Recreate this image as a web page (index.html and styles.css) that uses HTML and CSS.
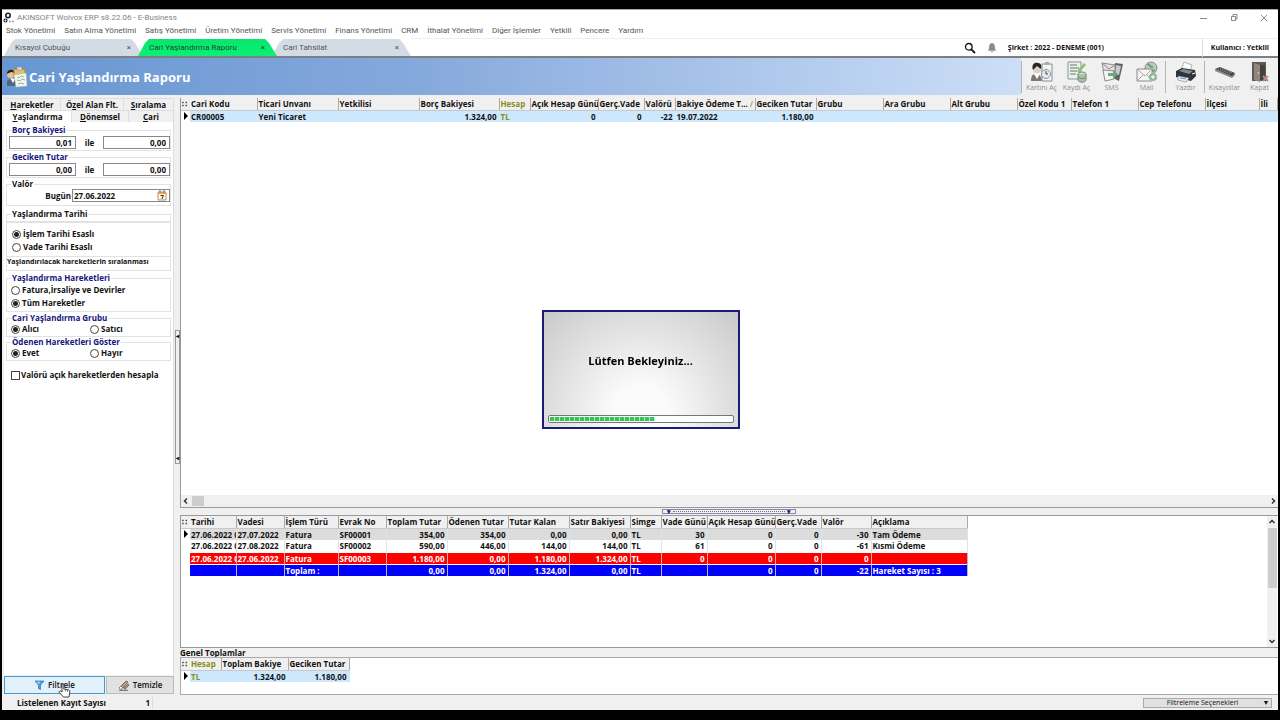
FILE: index.html
```html
<!DOCTYPE html>
<html lang="tr">
<head>
    <meta charset="UTF-8">
    <title>AKINSOFT Wolvox ERP</title>
    <link rel="stylesheet" href="styles.css">
</head>
<body>
    <header class="titlebar">
        <svg class="app-icon" width="12" height="12" viewBox="0 0 12 12">
            <circle cx="5" cy="3.500" r="2.200" fill="none" stroke="#16242e" stroke-width="1.600"/>
            <circle cx="2.500" cy="8.500" r="1.500" fill="none" stroke="#16242e" stroke-width="1.200"/>
            <path d="M6 9.500h2M9 9.500h2" stroke="#9aa4ac" stroke-width="1.500"/>
        </svg>
        <span class="app-title">AKINSOFT Wolvox ERP s8.22.06 - E-Business</span>
        <div class="window-buttons">
            <button aria-label="Küçült"><svg width="10" height="10" viewBox="0 0 10 10"><path d="M1 5.500h7"/></svg></button>
            <button aria-label="Geri yükle"><svg width="10" height="10" viewBox="0 0 10 10"><path d="M2.500 3.500h4v4h-4zM4 3.500v-2h4v4.500h-1.500"/></svg></button>
            <button aria-label="Pencereyi kapat"><svg width="10" height="10" viewBox="0 0 10 10"><path d="M2 2l6 6M8 2l-6 6"/></svg></button>
        </div>
    </header>

    <nav class="menu">
        <a href="#">Stok Yönetimi</a>
        <a href="#">Satın Alma Yönetimi</a>
        <a href="#">Satış Yönetimi</a>
        <a href="#">Üretim Yönetimi</a>
        <a href="#">Servis Yönetimi</a>
        <a href="#">Finans Yönetimi</a>
        <a href="#">CRM</a>
        <a href="#">İthalat Yönetimi</a>
        <a href="#">Diğer İşlemler</a>
        <a href="#">Yetkili</a>
        <a href="#">Pencere</a>
        <a href="#">Yardım</a>
    </nav>

    <div class="tabstrip">
        <div class="tab"><a href="#">Kısayol Çubuğu</a><button aria-label="Sekmeyi kapat">×</button></div>
        <div class="tab active"><a href="#">Cari Yaşlandırma Raporu</a><button aria-label="Sekmeyi kapat">×</button></div>
        <div class="tab"><a href="#">Cari Tahsilat</a><button aria-label="Sekmeyi kapat">×</button></div>
        <div class="session">
            <button aria-label="Ara"><svg width="12" height="12" viewBox="0 0 12 12"><circle cx="4.800" cy="4.800" r="3.300" fill="none" stroke="#111" stroke-width="1.300"/><path d="M7.300 7.300l3.700 3.700" stroke="#111" stroke-width="1.800"/></svg></button>
            <button aria-label="Bildirimler"><svg width="10" height="12" viewBox="0 0 10 12"><path d="M5 1c-2 .3-2.700 1.800-2.800 3.500C2.100 7 1.600 7.800.8 8.700h8.400C8.400 7.800 7.900 7 7.800 4.500 7.700 2.800 7 1.300 5 1zM3.800 9.300h2.400L5 10.700z" fill="#8b8b8b"/></svg></button>
            <span class="company">Şirket : 2022 - DENEME (001)</span>
            <span class="user">Kullanıcı : Yetkili</span>
        </div>
    </div>

    <div class="banner">
        <svg class="banner-icon" width="22" height="22" viewBox="0 0 22 22">
            <path d="M1 20v-5l4-3 5 2v6z" fill="#4f6580"/>
            <path d="M4 12l3 5 2-4z" fill="#fff"/>
            <circle cx="5" cy="8" r="4" fill="#edc39b"/>
            <path d="M1 8c-.5-5 7-6 8-1L5 6z" fill="#2b2320"/>
            <path d="M8 3h11v9H8z" fill="#e3c067" stroke="#a78335"/>
            <path d="M11 1h5v3h-5z" fill="#d5d9da" stroke="#8b8b8b" stroke-width=".5"/>
            <path d="M8 9l12-2 1 13-11 1z" fill="#f4f6f2" stroke="#b7bdb9" stroke-width=".6"/>
            <path d="M11 11l2 1 2-2 3 1M11 14l3 1 2-2 3 1M12 18l3-1 3 1" fill="none" stroke="#8fb98a"/>
        </svg>
        <h1>Cari Yaşlandırma Raporu</h1>
        <div class="toolbar">
            <div class="tools">
                <button>
                    <svg width="24" height="22" viewBox="0 0 24 22"><path d="M1 20c0-6 2-7 5-7s5 1 6 7z" fill="#777"/><path d="M4 13l3 5 3-5z" fill="#fff"/><circle cx="7" cy="8" r="4" fill="#dccdbf"/><path d="M3 9C1 3 5 1 8 2c3 0 4 3 3 6L7 5z" fill="#262626"/><path d="M12 3h10v17H12z" fill="#f5f5f5" stroke="#8a8a8a"/><path d="M15 1h4v3h-4z" fill="#aaa"/><circle cx="16" cy="13" r="4.500" fill="#e2e9ef" stroke="#8796a6"/><path d="M16 10v3h2" fill="none" stroke="#444"/></svg>
                    Kartını Aç
                </button>
                <button>
                    <svg width="24" height="22" viewBox="0 0 24 22"><path d="M3 1h13v17H3z" fill="#eef2ee" stroke="#89948b"/><path d="M5 4h7M5 7h9M5 10h7M5 13h6" stroke="#8da18f" stroke-width="1.500"/><path d="M12 10l7-8 2 2-7 8z" fill="#91c078"/><ellipse cx="17" cy="13" rx="4" ry="2" fill="#dde2db" stroke="#778b77"/><path d="M13 13v6c1 3 7 3 8 0v-6M13 16c2 2 6 2 8 0" fill="#aac3a8" stroke="#708871"/></svg>
                    Kaydı Aç
                </button>
                <button>
                    <svg width="24" height="22" viewBox="0 0 24 22"><path d="M15 2l8 1-4 17-6-3z" fill="#5f6163"/><path d="M16 4l5 1-2 9-4-1z" fill="#c5cbd1"/><path d="M2 2l13 2v8L4 13z" fill="#e4e4e4" stroke="#8c8c8c"/><path d="M2 2l7 6 6-4" fill="none" stroke="#b07474"/><path d="M3 9l12 1-1 8-9 2z" fill="#f3f3f3" stroke="#8b8b8b"/><path d="M8 12h5V9l5 4-5 5v-3H8z" fill="#71a57a"/></svg>
                    SMS
                </button>
                <button>
                    <svg width="24" height="22" viewBox="0 0 24 22"><circle cx="16" cy="7" r="6" fill="#bbc8bb" stroke="#84968a"/><path d="M12 3c3 0 3 4 6 3M13 10c2-2 4 1 7-1" stroke="#6d9e78" fill="none" stroke-width="2"/><path d="M2 8h15v12H2z" fill="#f5f5f5" stroke="#8a8a8a"/><path d="M2 8l8 7 7-7M2 20l6-6M17 20l-5-6" fill="none" stroke="#a8a8a8"/><circle cx="18" cy="16" r="4" fill="#91b898"/><path d="M16 16h4M18 14v4" stroke="#fff"/></svg>
                    Mail
                </button>
            </div>
            <div class="tools">
                <button>
                    <svg width="24" height="22" viewBox="0 0 24 22"><path d="M7 9L10 1l8 3-2 7z" fill="#fafafa" stroke="#999" stroke-width=".7"/><path d="M2 10l6-3 13 2 1 6-5 5-15-4z" fill="#303438"/><path d="M5 10l4-2 10 2-4 3z" fill="#828990"/><path d="M4 15l11 2-3 4-8-2z" fill="#eef2f8" stroke="#777" stroke-width=".6"/><path d="M6 17l6 1" stroke="#5e93ca"/><path d="M18 13l3-1" stroke="#fff"/></svg>
                    Yazdır
                </button>
            </div>
            <div class="tools">
                <button>
                    <svg width="24" height="22" viewBox="0 0 24 22"><path d="M2 8l5-2 15 6-3 4z" fill="#454545"/><path d="M2 8v2l17 7 3-3v-2l-3 3z" fill="#888"/><path d="M5 8l13 5M7 7l13 5" stroke="#aaa" stroke-dasharray="1 1"/></svg>
                    Kısayollar
                </button>
                <button>
                    <svg width="24" height="22" viewBox="0 0 24 22"><path d="M4 1h14v19H4z" fill="#625852"/><path d="M6 2l6 2v17l-6-2z" fill="#92877e"/><path d="M12 4h5v15h-5z" fill="#42413d"/><circle cx="10.500" cy="12" r=".8" fill="#ddd"/><path d="M15 15l5 5M20 15l-5 5" stroke="#b98a8a" stroke-width="2"/></svg>
                    Kapat
                </button>
            </div>
        </div>
    </div>

    <main class="workspace">
        <aside class="filters">
            <div class="filter-tabs upper">
                <button><u>H</u>areketler</button>
                <button>Ö<u>z</u>el Alan Flt.</button>
                <button><u>S</u>ıralama</button>
            </div>
            <div class="filter-tabs lower">
                <button class="selected"><u>Y</u>aşlandırma</button>
                <button><u>D</u>önemsel</button>
                <button><u>C</u>ari</button>
            </div>

            <form class="filter-form">
                <fieldset class="range">
                    <legend>Borç Bakiyesi</legend>
                    <input type="text" value="0,01" aria-label="Borç bakiyesi alt">
                    <span>ile</span>
                    <input type="text" value="0,00" aria-label="Borç bakiyesi üst">
                </fieldset>
                <fieldset class="range">
                    <legend>Geciken Tutar</legend>
                    <input type="text" value="0,00" aria-label="Geciken tutar alt">
                    <span>ile</span>
                    <input type="text" value="0,00" aria-label="Geciken tutar üst">
                </fieldset>
                <fieldset class="plain date-row">
                    <legend>Valör</legend>
                    <label for="valor">Bugün</label>
                    <div class="date-box">
                        <input type="text" id="valor" value="27.06.2022">
                        <button type="button" aria-label="Takvim"><svg width="10" height="11" viewBox="0 0 10 11"><path d="M1 2h8v8H1z" fill="#fff8e8" stroke="#a79675"/><path d="M1 2h8v2H1z" fill="#e9a94b"/><path d="M3 0v3M7 0v3" stroke="#777"/><path d="M3.500 5.500h3L4.800 9" fill="none" stroke="#333"/></svg></button>
                    </div>
                </fieldset>
                <fieldset class="plain heading">
                    <legend>Yaşlandırma Tarihi</legend>
                </fieldset>
                <div class="basis">
                    <label><input type="radio" name="tarih" checked>İşlem Tarihi Esaslı</label>
                    <label><input type="radio" name="tarih">Vade Tarihi Esaslı</label>
                </div>
                <p class="note">Yaşlandırılacak hareketlerin sıralanması</p>
                <fieldset class="stacked">
                    <legend>Yaşlandırma Hareketleri</legend>
                    <label><input type="radio" name="hareket">Fatura,İrsaliye ve Devirler</label>
                    <label><input type="radio" name="hareket" checked>Tüm Hareketler</label>
                </fieldset>
                <fieldset class="pair">
                    <legend>Cari Yaşlandırma Grubu</legend>
                    <label><input type="radio" name="grup" checked>Alıcı</label>
                    <label><input type="radio" name="grup">Satıcı</label>
                </fieldset>
                <fieldset class="pair">
                    <legend>Ödenen Hareketleri Göster</legend>
                    <label><input type="radio" name="odenen" checked>Evet</label>
                    <label><input type="radio" name="odenen">Hayır</label>
                </fieldset>
                <label class="check"><input type="checkbox">Valörü açık hareketlerden hesapla</label>
            </form>

            <div class="actions">
                <button class="primary">
                    <svg width="11" height="10" viewBox="0 0 11 10"><path d="M1 1h9L6.500 5v4.500l-2-1V5z" fill="#4a9be4" stroke="#2b73bd" stroke-width=".7"/><path d="M2.500 1.700h4L5 4z" fill="#a6d6fa"/></svg>
                    Filtrele
                    <svg class="pointer" width="13" height="15" viewBox="0 0 13 15"><path d="M4 9V2c0-1.300 1.800-1.300 1.800 0v4l5 1c1 .3 1.200 1 1 2l-.8 5H5.500L1.300 9.500C.6 8.300 2 7.500 3 8.400z" fill="#fff" stroke="#333" stroke-width=".9"/><path d="M7.600 6.500v2M9.500 7v2" stroke="#555" stroke-width=".7"/></svg>
                </button>
                <button>
                    <svg width="12" height="11" viewBox="0 0 12 11"><path d="M3 6l5-5 2 1-5 6z" fill="#dc8b66" stroke="#555" stroke-width=".7"/><path d="M1 8l2-2 2 2-2 1.500z" fill="#fff" stroke="#555" stroke-width=".7"/><path d="M6 8l4-4 1 1-4 4.500z" fill="#7eab69" stroke="#445" stroke-width=".6"/><path d="M1 10.300h9" stroke="#444" stroke-width=".8"/></svg>
                    Temizle
                </button>
            </div>
        </aside>

        <div class="splitter"><span class="grip">◂<i></i>◂</span></div>

        <section class="content">
            <div class="grid-main">
                <table class="grid accounts">
                    <colgroup>
                        <col class="w9"><col class="w67"><col class="w81"><col class="w81"><col class="w80"><col class="w31"><col class="w68"><col class="w46"><col class="w31"><col class="w80"><col class="w61"><col class="w67"><col class="w67"><col class="w67"><col class="w54"><col class="w67"><col class="w67"><col class="w54"><col>
                    </colgroup>
                    <thead>
                        <tr><th>∷</th><th>Cari Kodu</th><th>Ticari Unvanı</th><th>Yetkilisi</th><th>Borç Bakiyesi</th><th class="olive">Hesap</th><th>Açık Hesap Günü</th><th>Gerç.Vade</th><th>Valörü</th><th>Bakiye Ödeme T... <span class="sort">∕</span></th><th>Geciken Tutar</th><th>Grubu</th><th>Ara Grubu</th><th>Alt Grubu</th><th>Özel Kodu 1</th><th>Telefon 1</th><th>Cep Telefonu</th><th>İlçesi</th><th>İli</th></tr>
                    </thead>
                    <tbody>
                        <tr class="current"><td class="mark"><i></i></td><td>CR00005</td><td>Yeni Ticaret</td><td></td><td class="num">1.324,00</td><td class="olive">TL</td><td class="num">0</td><td class="num">0</td><td class="num">-22</td><td>19.07.2022</td><td class="num">1.180,00</td><td></td><td></td><td></td><td></td><td></td><td></td><td></td><td></td></tr>
                    </tbody>
                </table>
                <div class="hscroll">
                    <svg width="8" height="8" viewBox="0 0 8 8"><path d="M5 1.500L2.500 4 5 6.500"/></svg>
                    <span class="thumb"></span>
                    <svg width="8" height="8" viewBox="0 0 8 8"><path d="M3 1.500L5.500 4 3 6.500"/></svg>
                </div>
            </div>

            <div class="splitter-h"><span class="grip-h">▾<i></i>▾</span></div>

            <div class="grid-detail">
                <div class="detail-body">
                    <table class="grid movements">
                        <colgroup>
                            <col class="w9"><col class="w46"><col class="w48"><col class="w54"><col class="w48"><col class="w61"><col class="w61"><col class="w61"><col class="w61"><col class="w31"><col class="w46"><col class="w68"><col class="w46"><col class="w50"><col class="w96">
                        </colgroup>
                        <thead>
                            <tr><th>∷</th><th>Tarihi</th><th>Vadesi</th><th>İşlem Türü</th><th>Evrak No</th><th>Toplam Tutar</th><th>Ödenen Tutar</th><th>Tutar Kalan</th><th>Satır Bakiyesi</th><th>Simge</th><th>Vade Günü</th><th>Açık Hesap Günü</th><th>Gerç.Vade</th><th>Valör</th><th>Açıklama</th></tr>
                        </thead>
                        <tbody>
                            <tr class="grey"><td class="mark"><i></i></td><td>27.06.2022 0</td><td>27.07.2022</td><td>Fatura</td><td>SF00001</td><td class="num">354,00</td><td class="num">354,00</td><td class="num">0,00</td><td class="num">0,00</td><td>TL</td><td class="num">30</td><td class="num">0</td><td class="num">0</td><td class="num">-30</td><td>Tam Ödeme</td></tr>
                            <tr><td class="mark"></td><td>27.06.2022 0</td><td>27.08.2022</td><td>Fatura</td><td>SF00002</td><td class="num">590,00</td><td class="num">446,00</td><td class="num">144,00</td><td class="num">144,00</td><td>TL</td><td class="num">61</td><td class="num">0</td><td class="num">0</td><td class="num">-61</td><td>Kısmi Ödeme</td></tr>
                            <tr class="late"><td class="mark"></td><td>27.06.2022 0</td><td>27.06.2022</td><td>Fatura</td><td>SF00003</td><td class="num">1.180,00</td><td class="num">0,00</td><td class="num">1.180,00</td><td class="num">1.324,00</td><td>TL</td><td class="num">0</td><td class="num">0</td><td class="num">0</td><td class="num">0</td><td></td></tr>
                            <tr class="sum"><td class="mark"></td><td></td><td></td><td>Toplam :</td><td></td><td class="num">0,00</td><td class="num">0,00</td><td class="num">1.324,00</td><td class="num">0,00</td><td>TL</td><td></td><td class="num">0</td><td class="num">0</td><td class="num">-22</td><td>Hareket Sayısı : 3</td></tr>
                        </tbody>
                    </table>
                </div>
                <div class="vscroll">
                    <svg width="8" height="8" viewBox="0 0 8 8"><path d="M1.500 5L4 2.500 6.500 5"/></svg>
                    <span class="thumb"></span>
                    <svg width="8" height="8" viewBox="0 0 8 8"><path d="M1.500 3L4 5.500 6.500 3"/></svg>
                </div>
            </div>

            <h2>Genel Toplamlar</h2>
            <div class="grid-totals">
                <table class="grid totals">
                    <colgroup><col class="w9"><col class="w31"><col class="w67"><col class="w61"></colgroup>
                    <thead>
                        <tr><th>∷</th><th class="olive">Hesap</th><th>Toplam Bakiye</th><th>Geciken Tutar</th></tr>
                    </thead>
                    <tbody>
                        <tr class="current"><td class="mark"><i></i></td><td class="olive">TL</td><td class="num">1.324,00</td><td class="num">1.180,00</td></tr>
                    </tbody>
                </table>
            </div>
        </section>
    </main>

    <footer class="statusbar">
        <span class="status-label">Listelenen Kayıt Sayısı</span>
        <span class="status-count">1</span>
        <button class="filter-options"><span>Filtreleme Seçenekleri</span><i>▼</i></button>
    </footer>

    <div class="wait" role="dialog" aria-label="Lütfen Bekleyiniz">
        <p>Lütfen Bekleyiniz...</p>
        <div class="progress"><span style="width: 58%"></span></div>
    </div>
</body>
</html>
```
FILE: styles.css
```css
* {
    box-sizing: border-box;
}
body {
    margin: 0;
    height: 100vh;
    padding: 9px 2px 10px 2px;
    display: flex;
    flex-direction: column;
    background-color: #000;
    color: #111;
    font-family: "Open Sans", "Noto Sans", sans-serif;
    font-size: 8px;
    line-height: 12px;
}
button, input {
    font: inherit;
    color: inherit;
    margin: 0;
    padding: 0;
}
button {
    border: 0;
    background: none;
}
a {
    color: inherit;
    text-decoration: none;
}
svg {
    display: block;
    flex: none;
}
i {
    font-style: normal;
}

/* Title and menu */
.titlebar, .menu, .tab {
    font-family: Roboto, "Noto Sans", sans-serif;
}
.titlebar {
    display: flex;
    align-items: center;
    gap: 2px;
    height: 16px;
    padding-left: 1px;
    background-color: #fff;
    border-top: 1px solid #aaa;
    color: #858585;
}
.window-buttons {
    display: flex;
    gap: 20px;
    margin-left: auto;
    padding-right: 9px;
}
.window-buttons svg {
    fill: none;
    stroke: #888;
}
.menu {
    display: flex;
    gap: 9px;
    height: 13px;
    padding-left: 4px;
    background-color: #fff;
    color: #555;
}

/* Open documents */
.tabstrip {
    display: flex;
    align-items: flex-end;
    height: 20px;
    background-color: #fff;
    border-bottom: 2px solid #7b8084;
    padding-left: 2px;
}
.tab {
    display: flex;
    justify-content: space-between;
    align-items: center;
    width: 139px;
    height: 17px;
    margin-right: -5px;
    padding: 0 12px 0 11px;
    background-color: #d3dce4;
    clip-path: polygon(0 100%, 7px 4px, 11px 0, calc(100% - 12px) 0, calc(100% - 8px) 4px, 100% 100%);
    color: #555;
}
.tab.active {
    background: linear-gradient(#08e56b, #0af077);
    color: #174a2b;
    z-index: 1;
}
.session {
    display: flex;
    align-items: center;
    gap: 11px;
    flex: 1;
    height: 18px;
    margin-left: 5px;
    justify-content: flex-end;
    border-top: 1px solid #eee;
    font-weight: bold;
    font-size: 7px;
}
.company {
    width: 183px;
}
.user {
    border-left: 1px solid #ddd;
    padding: 3px 9px 3px 8px;
}

/* Report heading */
.banner {
    display: flex;
    align-items: center;
    height: 37px;
    padding-left: 4px;
    background: linear-gradient(90deg, #6796d2, #86a9dc 33%, #cddff7 80%);
}
h1 {
    margin: 0 auto 0 1px;
    font-size: 13px;
    line-height: 18px;
    color: #fff;
}
.toolbar {
    display: flex;
    align-items: center;
    align-self: stretch;
    background-color: #f0f0f0;
    color: #8d8d8d;
}
.tools {
    display: flex;
    border-left: 1px solid #b5b5b5;
    padding: 0 1px 0 2px;
}
.tools button {
    width: 35px;
    display: flex;
    flex-direction: column;
    align-items: center;
    line-height: 10px;
    font-size: 7px;
    white-space: nowrap;
}

/* Filters */
.workspace {
    display: flex;
    flex: 1;
    min-height: 0;
    padding-top: 3px;
    background-color: #f0f0f0;
    font-weight: bold;
}
.filters {
    display: flex;
    flex-direction: column;
    width: 172px;
    padding-left: 2px;
}
.filter-tabs {
    display: grid;
    height: 12px;
}
.upper {
    grid-template-columns: 57px 63px 1fr;
}
.lower {
    grid-template-columns: 68px 57px 1fr;
}
.filter-tabs button {
    border: 1px solid #dedede;
    border-width: 1px 1px 0 0;
    line-height: 11px;
}
.filter-tabs .selected {
    background-color: #fff;
}
.filter-form {
    flex: 1;
    padding: 3px 2px 0 2px;
    background-color: #fff;
    border-right: 1px solid #ddd;
}
fieldset {
    margin: 0 0 1px 0;
    padding: 1px 0 1px 2px;
    border: 1px solid #e2e2e2;
    min-width: 0;
}
legend {
    margin-left: 2px;
    padding: 0 1px;
    line-height: 10px;
    color: #14147c;
}
.plain legend {
    color: #111;
}
.range {
    display: flex;
    align-items: center;
    justify-content: space-between;
}
.range input {
    width: 67px;
    height: 13px;
    padding-right: 3px;
    border: 1px solid #888;
    text-align: right;
}
.date-row {
    display: flex;
    align-items: center;
    justify-content: flex-end;
    gap: 1px;
    padding-top: 0;
    padding-bottom: 3px;
}
.date-box {
    display: flex;
    align-items: center;
    width: 98px;
    height: 13px;
    border: 1px solid #888;
}
.date-box input {
    width: 84px;
    border: 0;
    padding-left: 1px;
    line-height: 11px;
    height: 11px;
}
.heading {
    margin-top: 3px;
    margin-bottom: 0;
}
.basis {
    display: flex;
    flex-direction: column;
    gap: 1px;
    padding: 5px 0 3px 3px;
    border: 1px solid #e2e2e2;
}
label {
    display: flex;
    align-items: center;
    gap: 2px;
}
.basis label, .stacked label, .pair label {
    padding-left: 2px;
}
input[type="radio"], input[type="checkbox"] {
    appearance: none;
    width: 9px;
    height: 9px;
    border: 1px solid #444;
    background-color: #fff;
}
input[type="radio"] {
    border-radius: 50%;
}
input[type="radio"]:checked {
    background: radial-gradient(circle, #222 2px, #fff 3px);
}
.note {
    margin: 0 0 2px 0;
    padding: 0 0 3px 0;
    font-size: 7px;
    line-height: 10px;
    border: 1px solid #e2e2e2;
    border-top: 0;
    white-space: nowrap;
}
.stacked {
    padding-bottom: 2px;
}
.stacked label + label {
    margin-top: 1px;
}
.pair {
    display: grid;
    grid-template-columns: 79px 1fr;
    margin-bottom: 0;
    padding-top: 0;
}
.check {
    margin-top: 8px;
    padding-left: 5px;
    gap: 1px;
}
.actions {
    display: grid;
    grid-template-columns: 101px 1fr;
    gap: 1px;
    height: 20px;
    padding-top: 1px;
    font-weight: 600;
}
.actions button {
    position: relative;
    display: flex;
    align-items: center;
    justify-content: center;
    gap: 3px;
    height: 18px;
    background-color: #e1e1e1;
    border: 1px solid #bbb;
}
.actions .primary {
    background-color: #e2f0fa;
    border-color: #4a98d0;
}
.pointer {
    position: absolute;
    left: 53px;
    top: 6px;
}

/* Splitters */
.splitter {
    display: flex;
    align-items: center;
    width: 6px;
    padding-left: 1px;
}
.grip {
    display: flex;
    flex-direction: column;
    justify-content: space-between;
    width: 5px;
    height: 134px;
    border: 1px solid #999;
    font-size: 6px;
    line-height: 10px;
}
.splitter-h {
    display: flex;
    justify-content: center;
    height: 7px;
}
.grip-h {
    display: flex;
    align-items: center;
    justify-content: space-between;
    gap: 2px;
    width: 134px;
    height: 5px;
    margin-top: 1px;
    padding: 0 4px;
    border: 1px solid #8a8ab0;
    font-size: 7px;
    line-height: 4px;
    color: #14147c;
}
.grip-h i {
    flex: 1;
    border-top: 1px dotted #777;
}

/* Data grids */
.content {
    display: flex;
    flex-direction: column;
    flex: 1;
    min-width: 0;
}
.grid {
    table-layout: fixed;
    border-collapse: collapse;
}
.accounts {
    width: 100%;
}
.movements {
    width: 786px;
}
.totals {
    width: 168px;
}
.grid th, .grid td {
    height: 12px;
    padding: 0 1px;
    line-height: 11px;
    text-align: left;
    white-space: nowrap;
    overflow: hidden;
}
.grid th {
    padding-right: 0;
    background-color: #f0f0f0;
    border-right: 1px solid #aaa;
    border-bottom: 1px solid #c8c8c8;
}
.grid th:first-child {
    border-right: 0;
    padding: 0 0 0 1px;
}
.grid td {
    border-right: 1px solid #dde5ec;
}
.grid .num {
    padding-right: 2px;
    text-align: right;
}
.grid .olive {
    color: #8c8c20;
}
.grid .sort {
    color: #999;
}
.grid .mark {
    padding: 0 0 0 3px;
    background-color: #fff;
    border: 0;
}
.mark i {
    display: block;
    border: 4px solid transparent;
    border-left-color: #000;
    border-right-width: 0;
    width: 4px;
}
.current {
    background-color: #cde8fd;
}
.grey {
    background-color: #dcdcdc;
}
.late {
    background-color: #f00;
    color: #fff;
}
.sum {
    background-color: #00f;
    color: #fff;
}
.movements .late td, .movements .sum td {
    border-right-color: #bbb;
    border-top: 1px solid #fff;
}
.w9 { width: 9px; }
.w31 { width: 31px; }
.w46 { width: 46px; }
.w48 { width: 48px; }
.w50 { width: 50px; }
.w54 { width: 54px; }
.w61 { width: 61px; }
.w67 { width: 67px; }
.w68 { width: 68px; }
.w80 { width: 80px; }
.w81 { width: 81px; }
.w96 { width: 96px; }

.grid-main {
    display: flex;
    flex-direction: column;
    justify-content: space-between;
    flex: 1;
    min-height: 0;
    background-color: #fff;
    border: 1px solid #999;
    border-width: 0 0 1px 1px;
}
.hscroll {
    display: flex;
    align-items: center;
    height: 12px;
    gap: 2px;
    padding: 0 1px;
    background-color: #f0f0f0;
}
.hscroll svg, .vscroll svg {
    fill: none;
    stroke: #333;
    stroke-width: 1.5;
}
.hscroll .thumb {
    width: 12px;
    height: 10px;
    margin-right: auto;
    background-color: #cdcdcd;
}
.grid-detail {
    display: flex;
    height: 133px;
    background-color: #fff;
    border: 1px solid #999;
    border-right: 0;
}
.detail-body {
    flex: 1;
}
.vscroll {
    display: flex;
    flex-direction: column;
    align-items: center;
    gap: 2px;
    width: 10px;
    margin-right: 1px;
    padding: 2px 0;
    background-color: #f0f0f0;
}
.vscroll .thumb {
    width: 9px;
    height: 60px;
    margin-bottom: auto;
    background-color: #cdcdcd;
}
h2 {
    margin: 0;
    font-size: 8px;
    line-height: 9px;
}
.grid-totals {
    height: 38px;
    background-color: #fff;
    border: 1px solid #aaa;
    border-right: 0;
}

/* Status */
.statusbar {
    display: flex;
    align-items: center;
    height: 15px;
    padding: 0 6px 0 15px;
    background-color: #f0f0f0;
    font-weight: bold;
    white-space: nowrap;
}
.status-label {
    width: 92px;
}
.status-count {
    width: 44px;
    text-align: right;
    padding-right: 2px;
    border-right: 1px solid #ddd;
}
.filter-options {
    display: flex;
    align-items: center;
    width: 129px;
    height: 10px;
    margin-left: auto;
    line-height: 8px;
    background-color: #e1e1e1;
    border: 1px solid #aaa;
    font-size: 7px;
    font-weight: normal;
}
.filter-options span {
    flex: 1;
}
.filter-options i {
    width: 10px;
}

/* Progress message lies over the whole window */
.wait {
    position: fixed;
    inset: 18px 0 0 1px;
    margin: auto;
    width: 198px;
    height: 119px;
    display: flex;
    flex-direction: column;
    justify-content: space-between;
    padding: 41px 4px 4px;
    border: 2px solid #1c1c78;
    background: radial-gradient(ellipse at 50% 90%, #fbfbfb 20%, #c9c9c9 100%);
    font-weight: bold;
    text-align: center;
}
.wait p {
    margin: 0;
    font-size: 11px;
    line-height: 16px;
    color: #000;
}
.progress {
    height: 8px;
    padding: 1px;
    border: 1px solid #777;
    border-radius: 2px;
    background-color: #fff;
}
.progress span {
    display: block;
    height: 4px;
    background: repeating-linear-gradient(90deg, #35c456 0, #35c456 4px, #b4ecc0 4px, #b4ecc0 5px);
}
```
